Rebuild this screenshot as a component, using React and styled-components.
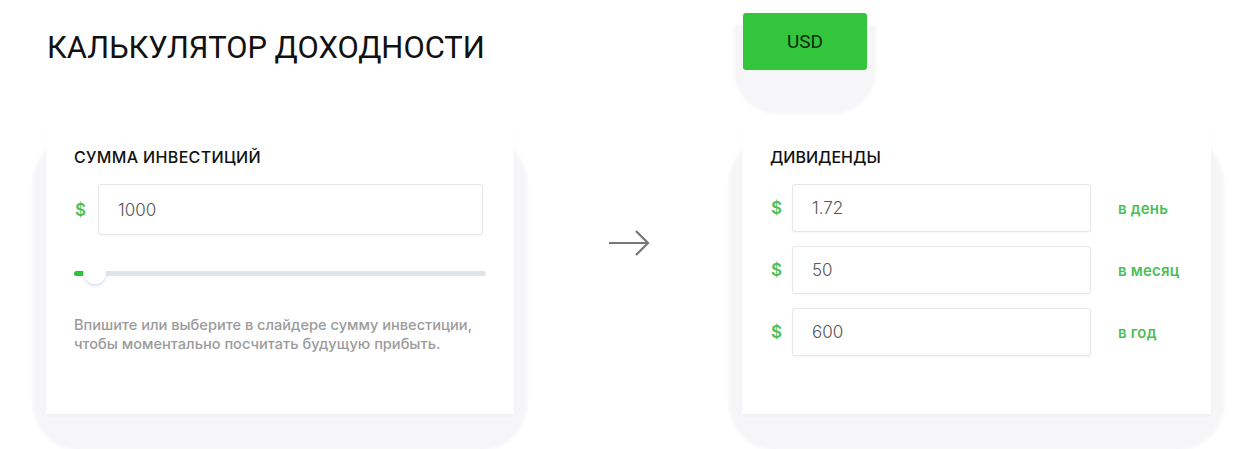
import React from "react";
import styled, { createGlobalStyle } from "styled-components";

const GlobalStyle = createGlobalStyle`
    html {
        background: #ffffff;
    }
    body {
        margin: 0;
        padding: 0;
        background: transparent;
        font-family: "Inter", "Liberation Sans", sans-serif;
    }
    * {
        box-sizing: border-box;
    }
`;

const rows = [
    { value: "1.72", period: "в день" },
    { value: "50", period: "в месяц" },
    { value: "600", period: "в год" },
];

const App = () => {
    return (
        <>
            <GlobalStyle />
            <Page>
                <Column>
                    <Header>
                        <Title>КАЛЬКУЛЯТОР ДОХОДНОСТИ</Title>
                    </Header>
                    <Card>
                        <CardTitle $spacing={0.35}>СУММА ИНВЕСТИЦИЙ</CardTitle>
                        <Row $gap={24}>
                            <Currency>$</Currency>
                            <Field readOnly value="1000" $width={385} $height={51} />
                        </Row>
                        <Slider>
                            <Track>
                                <TrackFill />
                            </Track>
                            <Thumb />
                        </Slider>
                        <Hint>
                            Впишите или выберите в слайдере сумму инвестиции,
                            <br />
                            чтобы моментально посчитать будущую прибыть.
                        </Hint>
                    </Card>
                </Column>

                <Middle>
                    <svg width="44" height="28" viewBox="0 0 44 28" fill="none">
                        <path d="M2 14H41M29 2L41 14L29 26" stroke="#777" strokeWidth="2.2" />
                    </svg>
                </Middle>

                <Column>
                    <Header>
                        <CurrencyButton>USD</CurrencyButton>
                    </Header>
                    <Card>
                        <CardTitle>ДИВИДЕНДЫ</CardTitle>
                        <Rows>
                            {rows.map((item) => (
                                <Row key={item.period} $gap={22}>
                                    <Currency>$</Currency>
                                    <Field readOnly value={item.value} $width={299} $height={48} />
                                    <Period>{item.period}</Period>
                                </Row>
                            ))}
                        </Rows>
                    </Card>
                </Column>
            </Page>
        </>
    );
};

// Styled Components
const Page = styled.div`
    display: grid;
    grid-template-columns: 468px 228px 469px;
    padding-left: 46px;
    width: 1255px;
    height: 449px;
    overflow: hidden;
`;

const Column = styled.div`
    display: flex;
    flex-direction: column;
`;

const Header = styled.div`
    height: 128px;
    display: flex;
    align-items: flex-start;
`;

const Title = styled.h1`
    margin: 30px 0 0 1px;
    font-family: "Roboto", "Liberation Sans", sans-serif;
    font-size: 30.9px;
    line-height: 36px;
    font-weight: 400;
    color: #111;
    white-space: nowrap;
`;

const CurrencyButton = styled.button`
    position: relative;
    margin-top: 13px;
    margin-left: 1px;
    width: 124px;
    height: 57px;
    border: none;
    border-radius: 3px;
    background: #33c53b;
    color: #0e2a0e;
    font-family: "Roboto", "Liberation Sans", sans-serif;
    font-size: 19px;
    font-weight: 400;

    &::before {
        content: "";
        position: absolute;
        left: -9px;
        right: -9px;
        top: 12px;
        bottom: -44px;
        border-radius: 0 0 44px 44px;
        background: #f6f6f8;
        z-index: -1;
        filter: blur(1.5px);
    }
`;

const Card = styled.div`
    position: relative;
    height: 286px;
    padding: 19px 28px 0;
    background: #ffffff;
    box-shadow: 0 2px 4px rgba(0, 0, 0, 0.03);

    &::before {
        content: "";
        position: absolute;
        left: -13px;
        right: -13px;
        top: 8px;
        bottom: -36px;
        border-radius: 46px;
        background: #f6f6f8;
        z-index: -1;
        filter: blur(1.5px);
    }
`;

const CardTitle = styled.div`
    font-size: 16px;
    line-height: 20px;
    font-weight: 500;
    color: #111;
    margin-bottom: 17px;
    letter-spacing: ${(props) => props.$spacing || 0}px;
`;

const Rows = styled.div`
    display: flex;
    flex-direction: column;
    gap: 14px;
`;

const Row = styled.div`
    display: flex;
    align-items: center;

    & > input {
        margin-left: ${(props) => props.$gap - 12}px;
    }
`;

const Currency = styled.span`
    width: 12px;
    padding-left: 1px;
    font-size: 17px;
    font-weight: 600;
    color: #4cbf56;
`;

const Field = styled.input`
    width: ${(props) => props.$width}px;
    height: ${(props) => props.$height}px;
    padding: 0 19px;
    border: 1px solid #e6e6e6;
    border-radius: 3px;
    background: #ffffff;
    box-shadow: 0 1px 2px rgba(0, 0, 0, 0.04);
    font-family: "Inter", "Liberation Sans", sans-serif;
    font-size: 17px;
    font-weight: 300;
    color: #555;
    outline: none;
`;

const Period = styled.span`
    margin-left: 27px;
    font-size: 15px;
    font-weight: 600;
    color: #4cbf56;
    letter-spacing: 0.2px;
`;

const Slider = styled.div`
    position: relative;
    margin-top: 26px;
    height: 24px;
    display: flex;
    align-items: center;
`;

const Track = styled.div`
    width: 412px;
    height: 5px;
    border-radius: 3px;
    background: #dfe4ea;
    overflow: hidden;
`;

const TrackFill = styled.div`
    width: 9px;
    height: 100%;
    background: #2fc23a;
`;

const Thumb = styled.div`
    position: absolute;
    left: 10px;
    top: 1px;
    width: 22px;
    height: 22px;
    border-radius: 50%;
    background: #ffffff;
    box-shadow: 0 2px 3px rgba(140, 165, 200, 0.35);
`;

const Hint = styled.p`
    margin: 31px 0 0;
    font-size: 14.6px;
    line-height: 19px;
    font-weight: 500;
    color: #9b9b9b;
`;

const Middle = styled.div`
    display: flex;
    justify-content: center;
    padding-top: 229px;
    padding-left: 2px;
`;

export default App;
